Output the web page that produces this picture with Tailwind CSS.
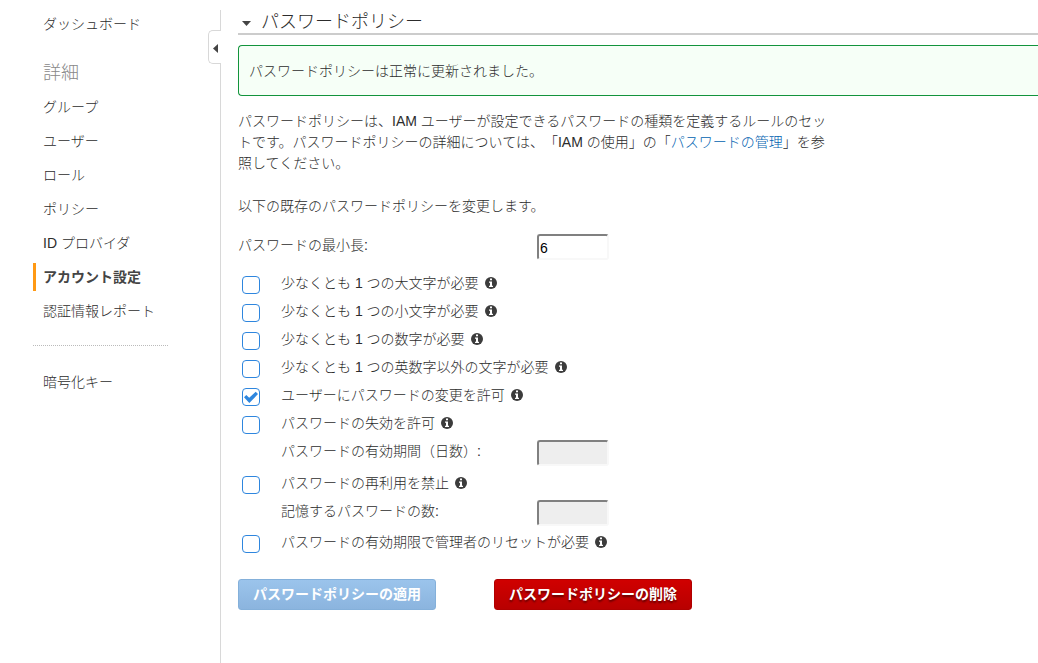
<!DOCTYPE html>
<html lang="ja">
<head>
    <meta charset="UTF-8">
    <meta name="viewport" content="width=device-width, initial-scale=1.0">
    <title>パスワードポリシー</title>
    <script src="https://cdn.jsdelivr.net/npm/@tailwindcss/browser@4"></script>
</head>
<body class="bg-white text-[#2c2c2c] text-sm leading-[21px] font-light font-['Liberation_Sans','Noto_Sans_CJK_JP',sans-serif] [text-spacing-trim:space-all] overflow-x-hidden">
    <!-- icons used more than once -->
    <svg class="hidden">
        <symbol id="info" viewBox="0 0 12 12">
            <circle cx="6" cy="6" r="6" fill="#3c3c3c"/>
            <path fill="#fff" d="M5 1.5h2v1.7H5zM4 4.5h3v4.2h1V10H4V8.700h1V5.700H4z"/>
        </symbol>
        <symbol id="check" viewBox="0 0 16 13">
            <path fill="#2e86de" d="M1 6.200 3.300 3.900 6.200 6.800 12.700 .8 15 3.100 6.300 12z"/>
        </symbol>
    </svg>

    <div class="flex min-h-screen">
        <!-- sidebar -->
        <nav class="w-[208px] shrink-0 pt-[7px] pl-[33px] leading-[34px]">
            <a href="#" class="block pl-[10px]">ダッシュボード</a>
            <h2 class="mt-[15px] pl-[10px] text-lg leading-[34px] font-light text-[#888]">詳細</h2>
            <ul>
                <li><a href="#" class="block pl-[10px]">グループ</a></li>
                <li><a href="#" class="block pl-[10px]">ユーザー</a></li>
                <li><a href="#" class="block pl-[10px]">ロール</a></li>
                <li><a href="#" class="block pl-[10px]">ポリシー</a></li>
                <li><a href="#" class="block pl-[10px]">ID プロバイダ</a></li>
                <li class="py-[3px]"><a href="#" class="block border-l-3 border-[#ff9914] pl-[7px] leading-7 font-bold text-[#444]">アカウント設定</a></li>
                <li><a href="#" class="block pl-[10px]">認証情報レポート</a></li>
            </ul>
            <hr class="mt-[17px] mb-[19px] w-[135px] border-t border-dotted border-[#bbb]">
            <a href="#" class="block pl-[10px]">暗号化キー</a>
        </nav>

        <!-- divider with collapse handle -->
        <div class="flex w-[13px] shrink-0 flex-col pt-[10px]">
            <div class="h-5 w-px self-end bg-[#d8d8d8]"></div>
            <button type="button" aria-label="メニューを閉じる" class="flex h-[34px] items-center rounded-l-[5px] border border-r-0 border-[#d8d8d8] pt-[3px] pl-1">
                <svg class="h-[9px] w-[5px]" viewBox="0 0 5 9"><path fill="#444" d="M5 0v9L0 4.500z"/></svg>
            </button>
            <div class="w-px flex-1 self-end bg-[#d8d8d8]"></div>
        </div>

        <main class="min-w-0 flex-1 pt-2 pl-[17px]">
            <h1 class="flex h-[27px] items-center border-b-2 border-[#ccc] pt-1 pl-1 text-lg leading-[25px] font-light">
                <svg class="mt-[2px] mr-[10px] h-[5px] w-[9px]" viewBox="0 0 9 5"><path fill="#444" d="M0 0h9L4.500 5z"/></svg>
                パスワードポリシー
            </h1>

            <div class="mt-[10px] rounded-l-[4px] border border-r-0 border-[#12943c] bg-[#f6fff7] px-[10px] pt-[15px] pb-[13px]">パスワードポリシーは正常に更新されました。</div>

            <p class="mt-[15px] max-w-[595px]">パスワードポリシーは、IAM ユーザーが設定できるパスワードの種類を定義するルールのセットです。パスワードポリシーの詳細については、「IAM の使用」の「<a href="#" class="text-[#0062b0]">パスワードの管理</a>」を参照してください。</p>
            <p class="mt-[22px]">以下の既存のパスワードポリシーを変更します。</p>

            <form class="mt-[17px] leading-[23px]">
                <div class="flex h-[38px] items-start">
                    <label for="minLength" class="w-[299px]">パスワードの最小長:</label>
                    <input id="minLength" type="text" value="6" class="h-[26px] w-[72px] rounded-[3px] border-2 border-t-[#808080] border-r-[#f8f8f8] border-b-[#f8f8f8] border-l-[#808080] pt-[2px] pl-px text-black">
                </div>

                <div class="flex h-7 items-start">
                    <input id="upper" type="checkbox" class="mt-1 mr-[21px] ml-1 size-[18px] appearance-none rounded-[4px] border border-[#2e86de]">
                    <label for="upper">少なくとも 1 つの大文字が必要</label>
                    <svg class="mt-[5px] ml-[6px] size-3"><use href="#info"/></svg>
                </div>
                <div class="flex h-7 items-start">
                    <input id="lower" type="checkbox" class="mt-1 mr-[21px] ml-1 size-[18px] appearance-none rounded-[4px] border border-[#2e86de]">
                    <label for="lower">少なくとも 1 つの小文字が必要</label>
                    <svg class="mt-[5px] ml-[6px] size-3"><use href="#info"/></svg>
                </div>
                <div class="flex h-7 items-start">
                    <input id="number" type="checkbox" class="mt-1 mr-[21px] ml-1 size-[18px] appearance-none rounded-[4px] border border-[#2e86de]">
                    <label for="number">少なくとも 1 つの数字が必要</label>
                    <svg class="mt-[5px] ml-[6px] size-3"><use href="#info"/></svg>
                </div>
                <div class="flex h-7 items-start">
                    <input id="symbol" type="checkbox" class="mt-1 mr-[21px] ml-1 size-[18px] appearance-none rounded-[4px] border border-[#2e86de]">
                    <label for="symbol">少なくとも 1 つの英数字以外の文字が必要</label>
                    <svg class="mt-[5px] ml-[6px] size-3"><use href="#info"/></svg>
                </div>
                <div class="flex h-7 items-start">
                    <span class="mt-1 mr-[21px] ml-1 grid size-[18px] place-items-center">
                        <input id="change" type="checkbox" checked class="peer col-start-1 row-start-1 size-[18px] appearance-none rounded-[4px] border border-[#2e86de]">
                        <svg class="pointer-events-none invisible col-start-1 row-start-1 h-[13px] w-4 peer-checked:visible"><use href="#check"/></svg>
                    </span>
                    <label for="change">ユーザーにパスワードの変更を許可</label>
                    <svg class="mt-[5px] ml-[6px] size-3"><use href="#info"/></svg>
                </div>
                <div class="flex h-7 items-start">
                    <input id="expire" type="checkbox" class="mt-1 mr-[21px] ml-1 size-[18px] appearance-none rounded-[4px] border border-[#2e86de]">
                    <label for="expire">パスワードの失効を許可</label>
                    <svg class="mt-[5px] ml-[6px] size-3"><use href="#info"/></svg>
                </div>
                <div class="flex h-8 items-start pl-[43px]">
                    <label for="expireDays" class="w-[256px]">パスワードの有効期間（日数）:</label>
                    <input id="expireDays" type="text" disabled class="h-[26px] w-[72px] rounded-[3px] border-2 border-t-[#808080] border-r-[#f8f8f8] border-b-[#f8f8f8] border-l-[#808080] bg-[#eee]">
                </div>
                <div class="flex h-7 items-start">
                    <input id="reuse" type="checkbox" class="mt-1 mr-[21px] ml-1 size-[18px] appearance-none rounded-[4px] border border-[#2e86de]">
                    <label for="reuse">パスワードの再利用を禁止</label>
                    <svg class="mt-[5px] ml-[6px] size-3"><use href="#info"/></svg>
                </div>
                <div class="flex h-[31px] items-start pl-[43px]">
                    <label for="remember" class="w-[256px]">記憶するパスワードの数:</label>
                    <input id="remember" type="text" disabled class="h-[26px] w-[72px] rounded-[3px] border-2 border-t-[#808080] border-r-[#f8f8f8] border-b-[#f8f8f8] border-l-[#808080] bg-[#eee]">
                </div>
                <div class="flex h-7 items-start">
                    <input id="adminReset" type="checkbox" class="mt-1 mr-[21px] ml-1 size-[18px] appearance-none rounded-[4px] border border-[#2e86de]">
                    <label for="adminReset">パスワードの有効期限で管理者のリセットが必要</label>
                    <svg class="mt-[5px] ml-[6px] size-3"><use href="#info"/></svg>
                </div>

                <div class="mt-5 flex gap-[58px] pb-6 font-bold text-white">
                    <button type="button" disabled class="h-[31px] rounded-[3px] border border-[#84b0da] bg-linear-to-b from-[#9bc4ec] to-[#8bb4de] px-[14px]">パスワードポリシーの適用</button>
                    <button type="button" class="h-[31px] rounded-[3px] border border-[#b00000] bg-linear-to-b from-[#d00000] to-[#b80000] px-[14px] text-shadow-[0_2px_2px_rgb(0_0_0_/_0.5)]">パスワードポリシーの削除</button>
                </div>
            </form>
        </main>
    </div>
</body>
</html>
